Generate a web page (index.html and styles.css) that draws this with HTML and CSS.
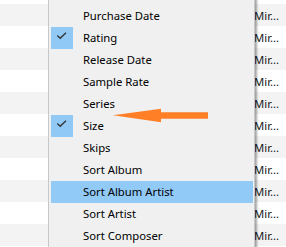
FILE: index.html
```html
<!DOCTYPE html>
<html>
<head>
<meta charset="utf-8">
<link rel="stylesheet" href="styles.css">
</head>
<body>
<div class="screen">
  <div class="list">
    <div class="row"><span class="cell">Mir...</span></div>
    <div class="row alt"><span class="cell">Mir...</span></div>
    <div class="row"><span class="cell">Mir...</span></div>
    <div class="row alt"><span class="cell">Mir...</span></div>
    <div class="row"><span class="cell">Mir...</span></div>
    <div class="row alt"><span class="cell">Mir...</span></div>
    <div class="row"><span class="cell">Mir...</span></div>
    <div class="row alt"><span class="cell">Mir...</span></div>
    <div class="row"><span class="cell">Mir...</span></div>
    <div class="row alt"><span class="cell">Mir...</span></div>
    <div class="row"><span class="cell">Mir...</span></div>
    <div class="row alt"><span class="cell">Mir...</span></div>
    <div class="row"><span class="cell">Mir...</span></div>
  </div>
  <div class="menu">
    <div class="item">Publisher</div>
    <div class="item">Purchase Date</div>
    <div class="item checked"><span class="check"><svg width="22" height="22" viewBox="0 0 22 22"><path d="M6.3 8.5 L9.2 11.3 L15 5.8" fill="none" stroke="#333" stroke-width="1.3"/></svg></span>Rating</div>
    <div class="item">Release Date</div>
    <div class="item">Sample Rate</div>
    <div class="item">Series</div>
    <div class="item checked"><span class="check"><svg width="22" height="22" viewBox="0 0 22 22"><path d="M6.3 8.5 L9.2 11.3 L15 5.8" fill="none" stroke="#333" stroke-width="1.3"/></svg></span>Size</div>
    <div class="item">Skips</div>
    <div class="item">Sort Album</div>
    <div class="item hover">Sort Album Artist</div>
    <div class="item">Sort Artist</div>
    <div class="item">Sort Composer</div>
  </div>
  <svg class="arrow" width="286" height="247" viewBox="0 0 286 247">
    <polygon points="113,115.3 161,108.7 161,112.3 208,112.3 208,118.8 161,118.8 161,122.2" fill="#ff7f27"/>
  </svg>
</div>
</body>
</html>
```
FILE: styles.css
```css
html, body {
  margin: 0;
  padding: 0;
  background: #fff;
}
.screen {
  position: relative;
  width: 286px;
  height: 247px;
  overflow: hidden;
  font-family: "Segoe UI", "Noto Sans", sans-serif;
  font-size: 11.3px;
  color: #000;
}
.list {
  margin-top: -18px;
  display: flex;
  flex-direction: column;
}
.row {
  height: 22px;
  display: flex;
  align-items: center;
  padding-left: 254px;
  background: #fff;
}
.row.alt {
  background: #f3f3f3;
}
.cell {
  color: #1a1a1a;
  white-space: nowrap;
}
.menu {
  position: absolute;
  left: 48px;
  top: -17px;
  width: 202px;
  padding: 0 1px 0 2px;
  background: #f0f0f0;
  border: 1px solid #c8c8c8;
  border-top: none;
  box-shadow: 2px 2px 2px rgba(0, 0, 0, 0.35);
}
.item {
  position: relative;
  height: 22px;
  line-height: 21px;
  padding-left: 32px;
  white-space: nowrap;
}
.item.hover {
  background: #91c9f7;
}
.check {
  position: absolute;
  left: 0;
  top: 0;
  width: 22px;
  height: 22px;
  background: #90c8f6;
}
.check svg {
  display: block;
}
.arrow {
  position: absolute;
  left: 0;
  top: 0;
  pointer-events: none;
}
```
